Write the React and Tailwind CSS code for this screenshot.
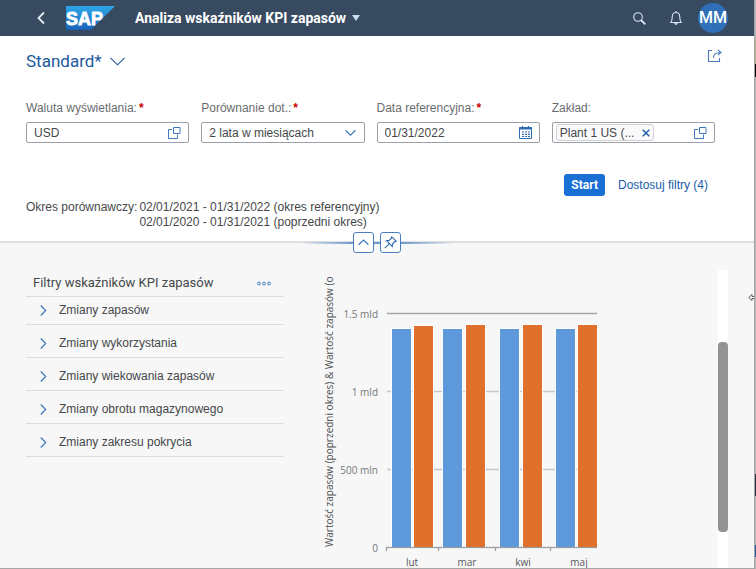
const filters = [
  'Zmiany zapasów',
  'Zmiany wykorzystania',
  'Zmiany wiekowania zapasów',
  'Zmiany obrotu magazynowego',
  'Zmiany zakresu pokrycia',
]

const months = [
  { label: 'lut', center: 92, blueX: 72, blueY: 59, orangeX: 94, orangeY: 56 },
  { label: 'mar', center: 147, blueX: 123, blueY: 59, orangeX: 146, orangeY: 55 },
  { label: 'kwi', center: 203, blueX: 180, blueY: 59, orangeX: 203, orangeY: 55 },
  { label: 'maj', center: 259, blueX: 236, blueY: 59, orangeX: 258, orangeY: 55 },
]

const ticks = [
  { label: '1.5 mld', y: 43 },
  { label: '1 mld', y: 121 },
  { label: '500 mln', y: 199 },
  { label: '0', y: 277 },
]

function ValueHelpIcon() {
  return (
    <svg width="13" height="13" viewBox="0 0 13 13" fill="none" stroke="#3f78bd">
      <path d="M4 3.5H0.5V12.5H9.5V8.5" />
      <path d="M5.5 1.5H12V7.5H5.5Z" />
    </svg>
  )
}

function CalendarIcon() {
  return (
    <svg width="13" height="13" viewBox="0 0 13 13" fill="none" stroke="#2f6cb5">
      <path d="M0.5 1.5H12.5V12.5H0.5Z" />
      <path d="M0 2.5H13" strokeWidth="2" />
      <path d="M3.5 0V2M9.5 0V2" />
      <path d="M3 6H5M6 6H8M9 6H11M3 8.3H5M6 8.3H8M9 8.3H11M3 10.5H5M6 10.5H8M9 10.5H11" strokeWidth="1.2" />
    </svg>
  )
}

function Chevron({ d, size = 10, color = '#3f78bd' }) {
  return (
    <svg width={size} height={size} viewBox="0 0 10 10" fill="none" stroke={color} strokeWidth="1.1">
      <path d={d} />
    </svg>
  )
}

function Field({ id, label, required, children }) {
  return (
    <div className="min-w-0">
      <label htmlFor={id} className="block h-[22px] text-[12px] leading-[16px] text-[#6a6d70] whitespace-nowrap">
        {label}
        {required && <span className="ml-0.5 font-bold text-[#c00]">*</span>}
      </label>
      <div className="relative flex h-[21px] items-center rounded-[2px] border border-[#9a9fa8] bg-white">
        {children}
      </div>
    </div>
  )
}

function ShellBar() {
  return (
    <header className="flex h-9 shrink-0 items-center bg-[#374a5f] pl-9 pr-[26px] font-[Roboto,sans-serif] text-white">
      <button aria-label="Wstecz" className="mr-[18px] flex">
        <svg width="11" height="14" viewBox="0 0 11 14" fill="none" stroke="#e4ecf5" strokeWidth="1.8">
          <path d="M8 1.5L2.5 7L8 12.5" />
        </svg>
      </button>
      <a href="#" aria-label="SAP" className="mr-5 flex">
        <svg width="50" height="24" viewBox="0 0 50 24">
          <defs>
            <linearGradient id="sap" x1="0" y1="0" x2="0" y2="1">
              <stop offset="0" stopColor="#2ea8ea" />
              <stop offset="1" stopColor="#1a62b8" />
            </linearGradient>
          </defs>
          <path d="M1 0H50L26 24H1Z" fill="url(#sap)" />
          <text x="1" y="19" fontSize="18" fontWeight="bold" fill="#fff" stroke="#fff" strokeWidth="0.8" fontFamily="Liberation Sans, sans-serif">
            SAP
          </text>
        </svg>
      </a>
      <button className="flex items-center gap-1.5 text-[14px] leading-[18px] font-bold whitespace-nowrap">
        Analiza wskaźników KPI zapasów
        <svg width="8" height="6" viewBox="0 0 8 6">
          <path d="M0 0H8L4 6Z" fill="#c5dcf5" />
        </svg>
      </button>
      <button aria-label="Szukaj" className="mr-6 ml-auto flex">
        <svg width="13" height="13" viewBox="0 0 13 13" fill="none" stroke="#d3e5f7">
          <circle cx="5" cy="5" r="4.3" strokeWidth="1.1" />
          <path d="M8 8L12.3 12.3" strokeWidth="1.9" />
        </svg>
      </button>
      <button aria-label="Powiadomienia" className="mr-4 flex">
        <svg width="12" height="14" viewBox="0 0 12 14" fill="none" stroke="#d3e5f7" strokeWidth="1.1">
          <path d="M6 0V1.5M0.7 11.5C2.3 9.5 2.3 8.5 2.3 5.5C2.3 3 3.8 1.5 6 1.5C8.2 1.5 9.7 3 9.7 5.5C9.7 8.5 9.7 9.5 11.3 11.5Z" />
          <path d="M4.5 12L6 13.5L7.5 12" />
        </svg>
      </button>
      <button className="size-[30px] rounded-full bg-[#2f70b8] text-center text-[16px] font-medium">MM</button>
    </header>
  )
}

function FilterBar() {
  return (
    <section className="relative shrink-0 border-b-2 border-[#dfdfdf] bg-white pl-[26px] pb-[11px] text-[12px] text-[#45484b]">
      <div className="flex items-start justify-between pt-[13px] pr-8">
        <button className="mt-0.5 flex items-center gap-2 font-[Roboto,sans-serif] text-[17px] leading-[20px] text-[#2058a0]">
          Standard*
          <svg width="15" height="9" viewBox="0 0 15 9" fill="none" stroke="#2058a0" strokeWidth="1.1">
            <path d="M0.5 0.8L7.5 7.8L14.5 0.8" />
          </svg>
        </button>
        <button aria-label="Udostępnij" className="flex">
          <svg width="15" height="13" viewBox="0 0 15 13" fill="none" stroke="#4676bb" strokeWidth="1.1">
            <path d="M5 1.5H1.5V12.5H12.5V9" />
            <path d="M6.5 9C6.5 5.5 8.5 3.5 13.5 3.5M11 0.8L14 3.5L11 6.2" />
          </svg>
        </button>
      </div>

      <div className="mt-[29px] grid grid-cols-4 gap-x-3 pr-[39px]">
        <Field id="currency" label="Waluta wyświetlania:" required>
          <input id="currency" defaultValue="USD" className="w-full min-w-0 bg-transparent pl-[7px] outline-none" />
          <button aria-label="Wybierz walutę" className="mr-[7px] flex shrink-0"><ValueHelpIcon /></button>
        </Field>
        <Field id="comparison" label="Porównanie dot.:" required>
          <select id="comparison" className="w-full min-w-0 appearance-none bg-transparent pl-[7px] outline-none">
            <option>2 lata w miesiącach</option>
          </select>
          <span className="pointer-events-none absolute right-2">
            <Chevron d="M0.5 3L5 7.5L9.5 3" size={11} />
          </span>
        </Field>
        <Field id="date" label="Data referencyjna:" required>
          <input id="date" defaultValue="01/31/2022" className="w-full min-w-0 bg-transparent pl-[7px] outline-none" />
          <button aria-label="Kalendarz" className="mr-[7px] flex shrink-0"><CalendarIcon /></button>
        </Field>
        <Field id="plant" label="Zakład:">
          <span className="ml-[3px] flex h-[17px] shrink-0 items-center gap-2 rounded-[3px] border border-[#d0d0d0] bg-[#fafafa] px-[3px] whitespace-nowrap">
            Plant 1 US (...
            <button aria-label="Usuń" className="flex">
              <svg width="8" height="8" viewBox="0 0 8 8" stroke="#1f5fae" strokeWidth="1.5">
                <path d="M0.7 0.7L7.3 7.3M7.3 0.7L0.7 7.3" />
              </svg>
            </button>
          </span>
          <input id="plant" className="w-full min-w-0 bg-transparent outline-none" />
          <button aria-label="Wybierz zakład" className="mr-[7px] flex shrink-0"><ValueHelpIcon /></button>
        </Field>
      </div>

      <div className="mt-[31px] flex items-center justify-end gap-[13px] pr-[46px]">
        <button className="h-[22px] rounded-[3px] bg-[#1a6fd4] px-[7px] font-[Roboto,sans-serif] font-bold text-white">Start</button>
        <button className="text-[#205ca8]">Dostosuj filtry (4)</button>
      </div>

      <div className="mt-1 flex gap-0.5 leading-[15px]">
        <span>Okres porównawczy:</span>
        <div>
          <p>02/01/2021 - 01/31/2022 (okres referencyjny)</p>
          <p>02/01/2020 - 01/31/2021 (poprzedni okres)</p>
        </div>
      </div>

      {/* collapse and pin buttons sit on the lower edge */}
      <div className="absolute inset-x-0 -bottom-3 flex items-center justify-center">
        <div className="h-0.5 w-[53px] bg-linear-to-r from-transparent to-[#6d99cf]" />
        <button aria-label="Zwiń nagłówek" className="flex size-[21px] items-center justify-center rounded-[3px] border border-[#4a80c0] bg-white">
          <Chevron d="M0.5 7L5 2.8L9.5 7" size={11} />
        </button>
        <div className="h-0.5 w-1.5 bg-[#6d99cf]" />
        <button aria-label="Przypnij nagłówek" className="flex size-[21px] items-center justify-center rounded-[3px] border border-[#4a80c0] bg-white">
          <svg width="13" height="13" viewBox="0 0 13 13" fill="none" stroke="#3568ac" strokeWidth="1.1">
            <path d="M7.8 0.8L12.2 5.2L10.8 5.6L8.6 7.8L8.3 10.5L2.5 4.7L5.2 4.4L7.4 2.2Z" />
            <path d="M5.2 7.8L0.8 12.2" />
          </svg>
        </button>
        <div className="h-0.5 w-[53px] bg-linear-to-r from-[#6d99cf] to-transparent" />
      </div>
    </section>
  )
}

function KpiFilters() {
  return (
    <nav className="w-[258px] shrink-0 text-[12px] text-[#45484b]">
      <div className="flex h-[27px] items-center justify-between border-b border-[#dcdcdc] pl-[7px] pr-[13px]">
        <h2 className="font-[Roboto,sans-serif] text-[13px]">Filtry wskaźników KPI zapasów</h2>
        <button aria-label="Więcej" className="flex">
          <svg width="14" height="5" viewBox="0 0 14 5" fill="none" stroke="#3f78bd">
            <circle cx="2" cy="2.5" r="1.4" />
            <circle cx="7" cy="2.5" r="1.4" />
            <circle cx="12" cy="2.5" r="1.4" />
          </svg>
        </button>
      </div>
      <ul className="-mt-[5px]">
        {filters.map((name) => (
          <li key={name} className="border-b border-[#dcdcdc]">
            <button className="flex h-8 w-full items-center gap-2.5 pt-1 pl-3 text-left">
              <Chevron d="M2.5 0.5L7 5L2.5 9.5" size={11} />
              {name}
            </button>
          </li>
        ))}
      </ul>
    </nav>
  )
}

function StockChart() {
  return (
    <svg width="280" height="298" viewBox="0 0 280 298" className="shrink-0 overflow-hidden font-['Open_Sans',sans-serif]">
      <text transform="translate(13 277) rotate(-90)" fontSize="10" fill="#4c4f52">
        Wartość zapasów (poprzedni okres) &amp; Wartość zapasów (o
      </text>
      {ticks.map((tick) => (
        <g key={tick.label}>
          <line x1="67" x2="277" y1={tick.y + 0.5} y2={tick.y + 0.5} stroke={tick.label === '1.5 mld' ? '#a4a8ae' : '#c3c6ca'} strokeWidth="1.4" />
          <text x="58" y={tick.y + 5} textAnchor="end" fontSize="10" fill="#74777a">{tick.label}</text>
        </g>
      ))}
      {months.map((month) => (
        <g key={month.label}>
          <rect x={month.blueX - 1} y={month.blueY - 1} width="21" height={278 - month.blueY} fill="#fff" />
          <rect x={month.orangeX - 1} y={month.orangeY - 1} width="21" height={278 - month.orangeY} fill="#fff" />
          <rect x={month.blueX} y={month.blueY} width="19" height={277 - month.blueY} fill="#5e99dc" />
          <rect x={month.orangeX} y={month.orangeY} width="19" height={277 - month.orangeY} fill="#e0712c" />
          <text x={month.center} y="296" textAnchor="middle" fontSize="10" fill="#55585b">{month.label}</text>
        </g>
      ))}
      <path d="M66.5 281V277.5H277M118.5 278V281M175.5 278V281M230.5 278V281" fill="none" stroke="#9a9da1" strokeWidth="1.2" />
    </svg>
  )
}

function App() {
  return (
    <div className="flex min-h-screen bg-[#f7f7f7] font-['Liberation_Sans',sans-serif]">
      <div className="flex min-w-0 flex-1 flex-col border-r border-b border-[#a5a5a5]">
        <ShellBar />
        <FilterBar />
        <main className="relative flex flex-1 pt-[27px] pl-[26px] pr-[26px]">
          <KpiFilters />
          <div className="ml-9">
            <StockChart />
          </div>
          <div className="ml-auto flex w-2.5 flex-col bg-white pt-[72px]">
            <div className="h-[190px] rounded-[4px] bg-[#929292]" />
          </div>
          <svg className="absolute top-[50px] right-0" width="6" height="9" viewBox="0 0 6 9" fill="#fff" stroke="#55585b">
            <path d="M6 3.5H4V1.5L0.8 4.5L4 7.5V5.5H6" />
          </svg>
        </main>
      </div>
      <div className="flex w-px flex-col bg-[#b5b5b5] pt-10">
        <div className="h-6 bg-[#b5ae88]" />
        <div className="h-[13px] bg-black" />
        <div className="mt-[397px] h-[22px] bg-[#26303f]" />
        <div className="mt-[49px] h-3 bg-[#2a5a9c]" />
      </div>
    </div>
  )
}

export default App
